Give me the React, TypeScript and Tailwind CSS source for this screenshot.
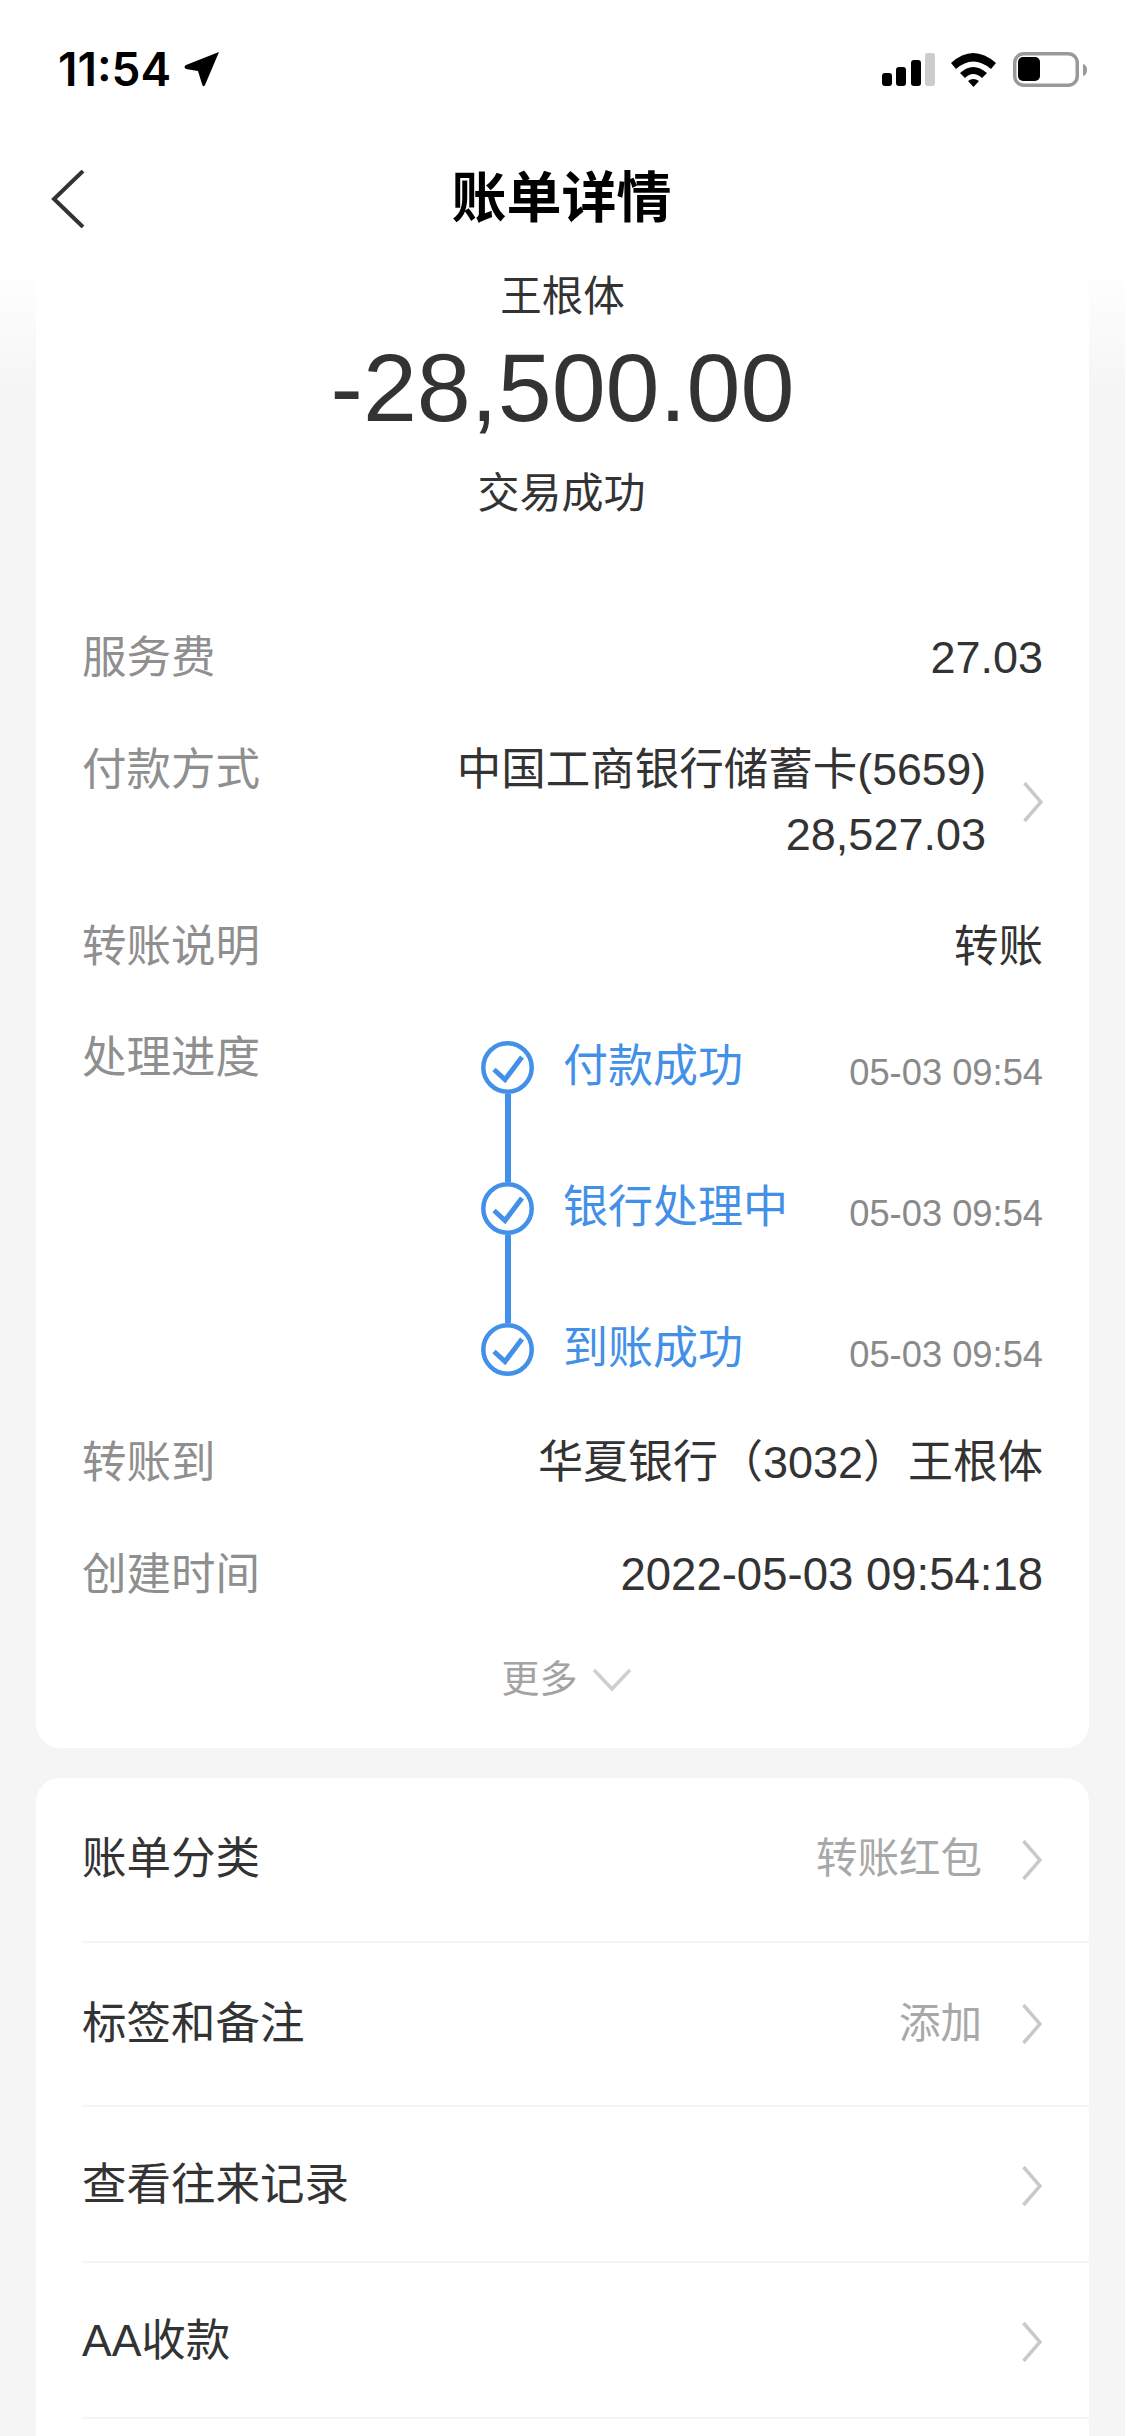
import React from 'react';

const Chevron = () => (
  <svg width="20" height="40" viewBox="0 0 20 40" fill="none" className="shrink-0">
    <path d="M1.5 1 L18 20 L1.5 39" stroke="#c9c9c9" strokeWidth="3.5" />
  </svg>
);

const StepIcon = () => (
  <svg width="53" height="53" viewBox="0 0 53 53" fill="none" className="shrink-0">
    <circle cx="26.5" cy="26.5" r="24.2" stroke="#4390e8" strokeWidth="4.5" />
    <path d="M13 28.5 L24 38.5 L41 16" stroke="#4390e8" strokeWidth="5" />
  </svg>
);

const steps = ['付款成功', '银行处理中', '到账成功'];

const Row = ({ label, value, className }: { label: string; value: string; className?: string }) => (
  <div className="flex justify-between mt-[47px] h-[65px] leading-[65px]">
    <span className="text-[#8f8f8f]">{label}</span>
    <span className={`text-[#333333] ${className ?? ''}`}>{value}</span>
  </div>
);

const ActionRow = ({ label, value, h }: { label: string; value?: string; h: string }) => (
  <div className={`flex items-center justify-between border-b-2 border-[#f5f5f5] ml-[46px] pr-[47px] ${h}`}>
    <span className="text-[#333333]">{label}</span>
    <div className="flex items-center gap-[40px]">
      {value && <span className="text-[41.5px] text-[#a8a8a8]">{value}</span>}
      <Chevron />
    </div>
  </div>
);

export default function App() {
  return (
    <div
      className="w-[1125px] h-[2436px] overflow-hidden bg-[#f5f5f5] text-[44.5px]"
      style={{ fontFamily: '"Liberation Sans", "Noto Sans CJK SC", sans-serif' }}
    >
      <div className="bg-gradient-to-b from-white from-[268px] to-[#f5f5f5] to-[392px] h-[400px] -mb-[400px]" />

      {/* Status bar */}
      <div className="relative flex items-start justify-between h-[120px] pt-[44px] pl-[58px] pr-[38px]">
        <div className="flex items-center gap-[13px] h-[50px]">
          <span className="text-[46px] font-semibold text-black" style={{ fontFamily: 'Inter, sans-serif' }}>11:54</span>
          <svg width="36" height="36" viewBox="0 0 36 36">
            <path d="M35 1 L21 34 Q19 37 18 33 L14 20 L2 18 Q-1 16 2 14 Z" fill="#000" />
          </svg>
        </div>
        <svg width="205" height="36" viewBox="0 0 205 36" className="mt-[8px]">
          <rect x="0" y="21" width="10" height="13" rx="3" fill="#000" />
          <rect x="14" y="15" width="10" height="19" rx="3" fill="#000" />
          <rect x="29" y="8" width="10" height="26" rx="3" fill="#000" />
          <rect x="43" y="1" width="10" height="33" rx="3" fill="#cccccc" />
          <path d="M69 11 Q91 -9 114 11 L109 17 Q91 2 74 17 Z" fill="#000" />
          <path d="M78 21 Q91 9 105 21 L100 26 Q91 18 83 26 Z" fill="#000" />
          <path d="M86 29 Q91 25 97 29 L91.5 35 Z" fill="#000" />
          <rect x="132.75" y="1.75" width="62.5" height="31.5" rx="9" fill="none" stroke="#999999" strokeWidth="3.5" />
          <rect x="136" y="5" width="22" height="24" rx="5" fill="#000" />
          <path d="M201 12 Q205 13 205 18 Q205 23 201 24 Z" fill="#999999" />
        </svg>
      </div>

      {/* Nav */}
      <div className="relative flex items-center justify-center h-[156px] pr-[2px]">
        <svg width="34" height="58" viewBox="0 0 34 58" className="absolute left-[51px] top-[50px]">
          <path d="M32 1 L3 29 L32 57" fill="none" stroke="#333333" strokeWidth="4" />
        </svg>
        <h1 className="text-[55px] font-bold text-black">账单详情</h1>
      </div>

      {/* Bill card */}
      <div className="relative mx-[36px] -mt-[6px] bg-white rounded-b-[24px] px-[46px] h-[1478px]">
        <div className="text-center text-[41.5px] leading-[52px] pt-[1px] text-[#333333]">王根体</div>
        <div className="text-center text-[97px] leading-[112px] mt-[9px] text-[#333333]">-28,500.00</div>
        <div className="text-center text-[42px] leading-[52px] mt-[24px] pr-[2px] text-[#333333]">交易成功</div>

        <div className="mt-[105px] flex justify-between h-[65px] leading-[65px]">
          <span className="text-[#8f8f8f]">服务费</span>
          <span className="text-[45px] text-[#333333]">27.03</span>
        </div>

        <div className="flex justify-between mt-[47px]">
          <span className="text-[#8f8f8f] leading-[65px]">付款方式</span>
          <div className="flex items-center gap-[37px]">
            <div className="text-right leading-[65px] text-[#333333]">
              <div>中国工商银行储蓄卡(5659)</div>
              <div className="text-[45px]">28,527.03</div>
            </div>
            <Chevron />
          </div>
        </div>

        <Row label="转账说明" value="转账" />

        <div className="flex justify-between mt-[47px]">
          <span className="text-[#8f8f8f] leading-[65px] -mt-[1px]">处理进度</span>
          <div className="w-[562px] pt-[15px]">
            {steps.map((s, i) => (
              <div key={s} className={`flex gap-[29px] ${i < 2 ? 'h-[141px]' : 'h-[53px]'}`}>
                <div className="flex flex-col items-center w-[53px]">
                  <StepIcon />
                  {i < 2 && <div className="w-[6px] flex-1 bg-[#4390e8]" />}
                </div>
                <span className="text-[45px] leading-[53px] -mt-[1px] text-[#4390e8]">{s}</span>
                <span className="ml-auto text-[36.3px] leading-[53px] mt-[5px] text-[#8a8a8a]">05-03 09:54</span>
              </div>
            ))}
          </div>
        </div>

        <div className="flex justify-between mt-[54px] h-[65px] leading-[65px]">
          <span className="text-[#8f8f8f]">转账到</span>
          <span className="text-[45px] text-[#333333]">华夏银行（3032）王根体</span>
        </div>
        <Row label="创建时间" value="2022-05-03 09:54:18" className="text-[45.5px]" />

        <div className="flex items-center justify-center gap-[14px] mt-[46px] h-[52px] pl-[8px] text-[38px] text-[#a3a3a3]">
          <span>更多</span>
          <svg width="40" height="24" viewBox="0 0 40 24" fill="none" className="mt-[2px]">
            <path d="M2 2 L20 21 L38 2" stroke="#cfcfcf" strokeWidth="3.5" />
          </svg>
        </div>
      </div>

      {/* Actions card */}
      <div className="mx-[36px] mt-[30px] bg-white rounded-t-[24px] h-[700px]">
        <ActionRow label="账单分类" value="转账红包" h="h-[165px]" />
        <ActionRow label="标签和备注" value="添加" h="h-[164px]" />
        <ActionRow label="查看往来记录" h="h-[156px] pt-[3px]" />
        <ActionRow label="AA收款" h="h-[156px] pt-[3px]" />
      </div>
    </div>
  );
}
